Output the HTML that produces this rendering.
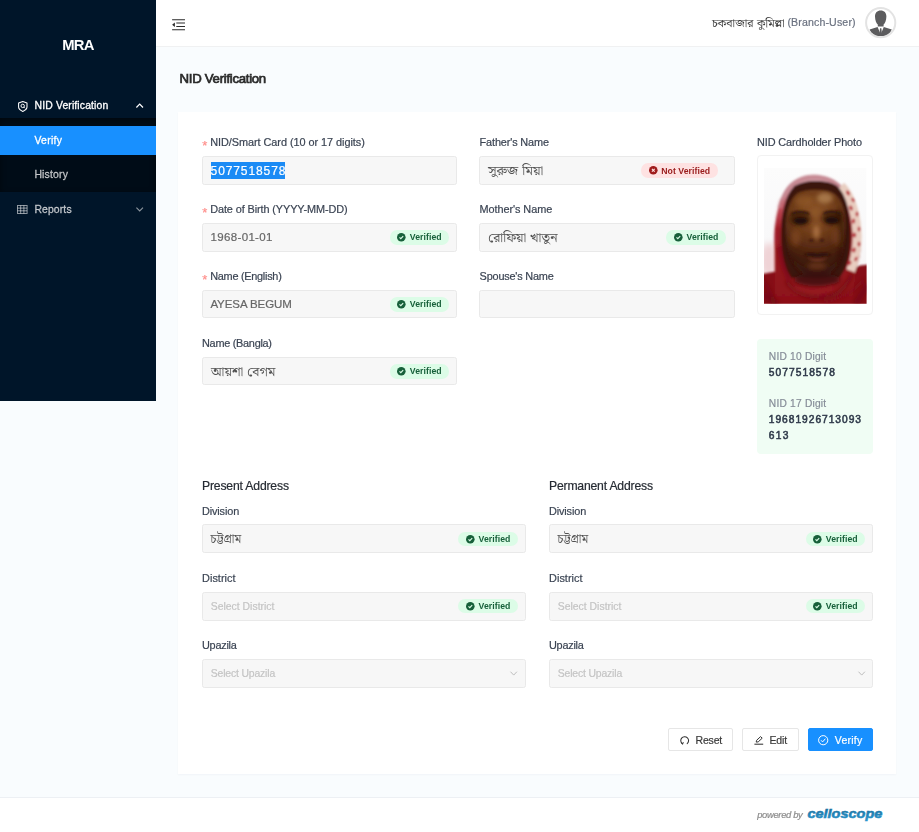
<!DOCTYPE html>
<html lang="en">
<head>
<meta charset="utf-8">
<title>NID Verification</title>
<style>
*{box-sizing:border-box;margin:0;padding:0}
html,body{width:919px;height:832px;overflow:hidden}
body{position:relative;background:#f9fcfe;font-family:"Liberation Sans","Noto Sans Bengali","Noto Serif Bengali",sans-serif;color:#333}
.t{position:absolute;white-space:pre;line-height:20px;display:block;-webkit-text-stroke:.2px}
aside .t{-webkit-text-stroke:.3px}
.t.bn{font-family:"Liberation Sans","Noto Serif Bengali","Noto Sans Bengali",serif;-webkit-text-stroke:0}
.abs{position:absolute}
.tx{position:absolute;left:0;top:0;right:0;bottom:0;will-change:transform}
aside{position:absolute;left:0;top:0;width:156px;height:400.5px;background:#001529}
aside .sub{position:absolute;left:0;top:117.5px;width:156px;height:74.5px;background:#000c17;box-shadow:inset 0 2px 6px rgba(0,0,0,.45)}
aside .active{position:absolute;left:0;top:126px;width:156px;height:29px;background:#1890ff}
header{position:absolute;left:156px;top:0;width:763px;height:47px;background:#fff;border-bottom:1px solid #f0f1f2}
main{position:absolute;left:156px;top:46px;width:763px;height:751px}
.card{position:absolute;left:178px;top:112px;width:718px;height:662px;background:#fff;box-shadow:0 1px 2px rgba(20,40,80,.035)}
footer{position:absolute;left:0;top:797px;width:919px;height:35px;background:#fff;border-top:1px solid #edf0f4}
.in{position:absolute;height:28.2px;background:#f7f7f7;border:1px solid #e9e9e9;border-radius:2.5px}
.pill{position:absolute;height:14.4px;border-radius:7.2px}
.pill.v{background:#dcfce7}
.pill.n{background:#fee2e2}
.btn{position:absolute;top:616.3px;height:22.9px;border:1px solid #e6e6e6;background:#fff;border-radius:2px}
.btn.primary{background:#1890ff;border-color:#1890ff}
svg{position:absolute;overflow:visible}
</style>
</head>
<body>

<aside>
  <div class="sub"></div>
  <div class="active"></div>
  <!-- shield icon -->
  <svg style="left:17.6px;top:100.8px" width="9.6" height="11" viewBox="0 0 9.6 11" fill="none" stroke="#fff" stroke-width="1.05" stroke-linejoin="round">
    <path d="M4.8 .6 L9 2 V6.1 C9 8.2 6.6 9.7 4.8 10.4 C3 9.7 .6 8.2 .6 6.1 V2 Z"/>
    <circle cx="4.7" cy="4.9" r="1.7" stroke-width=".95"/>
    <path d="M5.9 6.1 L7 7.2" stroke-width=".95"/>
  </svg>
  <!-- chevron up -->
  <svg style="left:136px;top:103.4px" width="7.4" height="5" viewBox="0 0 7.4 5" fill="none" stroke="#fff" stroke-width="1.2"><path d="M.4 4.5 L3.7 1.1 L7 4.5"/></svg>
  <!-- table icon -->
  <svg style="left:16.8px;top:205.2px" width="10.6" height="9" viewBox="0 0 10.6 9" fill="none" stroke="rgba(255,255,255,.58)" stroke-width=".95">
    <rect x=".5" y=".5" width="9.6" height="8"/>
    <path d="M.5 3.1 H10.1 M.5 5.8 H10.1 M3.7 .5 V8.5 M6.9 .5 V8.5"/>
  </svg>
  <!-- chevron down -->
  <svg style="left:136px;top:206.8px" width="7.4" height="5" viewBox="0 0 7.4 5" fill="none" stroke="rgba(255,255,255,.55)" stroke-width="1.1"><path d="M.4 .6 L3.7 4 L7 .6"/></svg>
<div class="tx">
<span class="t" style="left:62.30px;top:35px;font-size:14.8px;color:#fff;font-weight:700;letter-spacing:-0.752px;-webkit-text-stroke:0;">MRA</span>
<span class="t" style="left:34.60px;top:96px;font-size:10.4px;color:#fff;letter-spacing:0.133px;">NID Verification</span>
<span class="t" style="left:34.40px;top:131px;font-size:10.4px;color:#fff;letter-spacing:0.320px;">Verify</span>
<span class="t" style="left:34.40px;top:165px;font-size:10.4px;color:rgba(255,255,255,.65);letter-spacing:0.209px;">History</span>
<span class="t" style="left:34.40px;top:200px;font-size:10.4px;color:rgba(255,255,255,.65);letter-spacing:0.135px;">Reports</span>
</div>
</aside>

<header>
  <!-- menu-fold icon -->
  <svg style="left:16px;top:18.6px" width="13.2" height="11.6" viewBox="0 0 13.2 11.6" fill="none" stroke="#2b2b2b" stroke-width="1.15">
    <path d="M.1 .7 H13 M4.3 4 H13 M4.3 7.5 H13 M.1 10.8 H13"/>
    <path d="M.1 5.75 L2.9 3.5 V8 Z" fill="#2b2b2b" stroke="none"/>
  </svg>
  <!-- avatar -->
  <svg style="left:708.6px;top:7.2px" width="31.4" height="31.4" viewBox="0 0 31.4 31.4">
    <defs><clipPath id="avc"><circle cx="15.7" cy="15.7" r="13.4"/></clipPath></defs>
    <circle cx="15.7" cy="15.7" r="14.6" fill="#fff" stroke="#e3e3e3" stroke-width="2"/>
    <g clip-path="url(#avc)" fill="#5c5c5e">
      <path d="M15.7 3.4 C19.2 3.4 21.4 5.6 21.4 9.4 C21.4 13.4 19.8 16.6 18.6 17.6 L18.6 19.6 L12.8 19.6 L12.8 17.6 C11.6 16.6 10 13.4 10 9.4 C10 5.6 12.2 3.4 15.7 3.4 Z"/>
      <path d="M4.6 22.4 L12.6 19.9 L15.7 27.5 L18.8 19.9 L26.8 22.4 C25 27.5 20.5 29.6 15.7 29.6 C10.9 29.6 6.4 27.5 4.6 22.4 Z"/>
      <path d="M15 21.2 H16.4 L17 27.4 L15.7 28.9 L14.4 27.4 Z"/>
    </g>
  </svg>
<div class="tx">
<span class="t bn" style="left:556.00px;top:13px;font-size:11.42px;color:#333;transform:scaleX(1.063);transform-origin:0 50%;">চকবাজার কুমিল্লা</span>
<span class="t" style="left:631.40px;top:12px;font-size:10.6px;color:#6b7280;letter-spacing:0.139px;">(Branch-User)</span>
</div>
</header>

<main>
<div class="tx">
<span class="t" style="left:23.60px;top:23px;font-size:13.2px;color:#2a2a2a;letter-spacing:-0.286px;-webkit-text-stroke:.7px #2a2a2a;">NID Verification</span>
</div>
</main>

<section class="card">
  <!-- inputs: top form -->
  <div class="in" style="left:24px;top:44px;width:255px;height:29px"></div>
  <div class="in" style="left:24px;top:111px;width:255px;height:29px"></div>
  <div class="in" style="left:24px;top:178px;width:255px;height:28px"></div>
  <div class="in" style="left:24px;top:245px;width:255px;height:28px"></div>
  <div class="in" style="left:301.3px;top:44px;width:255.3px;height:29px"></div>
  <div class="in" style="left:301.3px;top:111px;width:255.3px;height:29px"></div>
  <div class="in" style="left:301.3px;top:178px;width:255.3px;height:28px"></div>
  <div class="abs" style="left:32.7px;top:49.5px;width:74.3px;height:17.2px;background:#1b8bf5"></div>
  <!-- photo frame -->
  <div class="abs" style="left:579.4px;top:43.2px;width:115.4px;height:160px;background:#fff;border:1px solid #f2f2f2;border-radius:4px"></div>
    <svg style="left:586px;top:55.8px" width="102.6" height="135.7" viewBox="0 0 102.6 135.7" role="img" aria-label="NID cardholder photo">
    <defs>
      <clipPath id="pc"><rect width="102.6" height="135.7"/></clipPath>
      <filter id="b1" x="-10%" y="-10%" width="120%" height="120%"><feGaussianBlur stdDeviation="1.1"/></filter>
      <filter id="b2" x="-20%" y="-20%" width="140%" height="140%"><feGaussianBlur stdDeviation="2"/></filter>
      <filter id="b3" x="-30%" y="-30%" width="160%" height="160%"><feGaussianBlur stdDeviation="3.2"/></filter>
      <radialGradient id="fg" cx="51" cy="44" r="50" gradientUnits="userSpaceOnUse">
        <stop offset="0" stop-color="#8e5629"/><stop offset=".38" stop-color="#74401b"/><stop offset=".75" stop-color="#542811"/><stop offset="1" stop-color="#3f1a0c"/>
      </radialGradient>
      <linearGradient id="hg" x1="0" y1="6" x2="0" y2="136" gradientUnits="userSpaceOnUse"><stop offset="0" stop-color="#d3a3ab"/><stop offset=".14" stop-color="#c98a95"/><stop offset=".3" stop-color="#b54550"/><stop offset=".42" stop-color="#9b1721"/><stop offset="1" stop-color="#8c1119"/></linearGradient>
      <linearGradient id="bgg" x1="0" y1="0" x2="0" y2="1"><stop offset="0" stop-color="#fcfcfc"/><stop offset=".55" stop-color="#f8f8f9"/><stop offset="1" stop-color="#f6efef"/></linearGradient>
    </defs>
    <g clip-path="url(#pc)">
      <rect width="102.6" height="135.7" fill="url(#bgg)"/>
      <ellipse cx="5" cy="92" rx="9" ry="17" fill="#efd3d6" filter="url(#b3)"/>
      <g filter="url(#b1)">
        <!-- clothing -->
        <path d="M-2 106 L16 102.8 L40 100 L90 100 L96 97.6 L105 96.4 L105 138 L-2 138 Z" fill="#861018"/>
        <!-- scarf hood -->
        <path d="M10.8 136 L10.6 68 C11 54 13.6 38 20.4 23 C27.4 10.6 39 6.4 50 6.4 C62 6.8 70 10.8 74.4 15.2 C80.4 21 85 27.6 88 35 C92.4 43.6 95.2 55 96.4 67.4 C97.4 80 96 92 92 100.4 L88 136 Z" fill="url(#hg)"/>
        <!-- dusky top band of scarf -->
        <path d="M15.6 40 C20 20 33 9.4 50 9.2 C64 9.4 73 14 79 22" fill="none" stroke="#c68993" stroke-width="3.6"/>
        <!-- right patterned band: cream base with red checks -->
        <path d="M77 18 C85 26 90 40 92.2 55 C94 68 93.6 86 86.6 103" fill="none" stroke="#e8cdc0" stroke-width="9"/>
        <g fill="#b8323a">
          <ellipse cx="84" cy="25" rx="1.6" ry="2.6" transform="rotate(-35 84 25)"/>
          <ellipse cx="89" cy="32" rx="1.4" ry="2.4" transform="rotate(-25 89 32)"/>
          <ellipse cx="87" cy="40" rx="1.6" ry="2.6" transform="rotate(-18 87 40)"/>
          <ellipse cx="93" cy="46" rx="1.4" ry="2.6"/>
          <ellipse cx="89.6" cy="53" rx="1.6" ry="2.6"/>
          <ellipse cx="95" cy="61" rx="1.4" ry="2.6"/>
          <ellipse cx="90.6" cy="67" rx="1.6" ry="2.6"/>
          <ellipse cx="95" cy="76" rx="1.4" ry="2.6"/>
          <ellipse cx="90" cy="82" rx="1.6" ry="2.6" transform="rotate(14 90 82)"/>
          <ellipse cx="92" cy="91" rx="1.4" ry="2.4" transform="rotate(25 92 91)"/>
          <ellipse cx="85.6" cy="95" rx="1.6" ry="2.4" transform="rotate(35 85.6 95)"/>
        </g>
        <!-- dark hair / shadow under the scarf -->
        <path d="M16.8 70 C16.6 46 21 28 30 18.6 C38.6 11.4 62.6 11.2 72.4 17.4 C82.4 26 86.6 45 86.6 68 C86.6 86 83 101 75 110 L27 110 C20 101 17 86 16.8 70 Z" fill="#3a1611"/>
      </g>
      <g filter="url(#b1)">
        <!-- face -->
        <path d="M21.6 64 C21 45 25 31 34 24.4 C44 20.4 60 20.4 70 25.2 C79 31 82 44 81.6 61 C81.2 79 78 93 70 103 C62 110.6 42 110.6 34 103 C26 94 22.2 80 21.6 64 Z" fill="url(#fg)"/>
      </g>
      <g filter="url(#b2)">
        <ellipse cx="61" cy="30" rx="8" ry="5.4" fill="#b98a5a" opacity=".7"/>
        <ellipse cx="40" cy="33" rx="9" ry="5.6" fill="#965c2c" opacity=".55"/>
        <ellipse cx="31.6" cy="70" rx="5" ry="8" fill="#8e5026" opacity=".5"/>
        <ellipse cx="72" cy="69" rx="4.4" ry="8" fill="#80451f" opacity=".45"/>
        <ellipse cx="52.4" cy="64" rx="3.4" ry="7" fill="#b97d4c" opacity=".75"/>
        <ellipse cx="53" cy="97.6" rx="9" ry="3.6" fill="#7d4020" opacity=".55"/>
        <!-- eye-zone shadow -->
        <ellipse cx="36" cy="51" rx="11" ry="7" fill="#2f1508" opacity=".7"/>
        <ellipse cx="68.4" cy="50.4" rx="11" ry="7" fill="#2f1508" opacity=".7"/>
        <!-- right-side and lower-face shading -->
        <path d="M76 40 C82 52 82 80 72 100 C76 84 76 58 72 44 Z" fill="#2e1208" opacity=".55"/>
        <path d="M23 82 C29 100 42 109 53 109 C64 109 75 100 80 82 C74 96 64 101.6 53 101.6 C42 101.6 30 96 23 82 Z" fill="#34140b" opacity=".75"/>
        <ellipse cx="53" cy="111.6" rx="23" ry="6.4" fill="#3c1210" opacity=".85"/>
      </g>
      <g filter="url(#b1)">
        <!-- brows + eyes -->
        <path d="M27.6 46.2 C32 43.6 40 43.6 45 46" fill="none" stroke="#2f160a" stroke-width="2.2"/>
        <path d="M59.6 45.6 C64 43.2 72 43.4 77 46.2" fill="none" stroke="#2f160a" stroke-width="2.2"/>
        <ellipse cx="36.6" cy="52.8" rx="6.6" ry="3.2" fill="#24100a"/>
        <ellipse cx="67.8" cy="52.2" rx="6.6" ry="3.2" fill="#24100a"/>
        <!-- nose -->
        <ellipse cx="47.4" cy="72.6" rx="2.2" ry="1.5" fill="#3f1b0c"/>
        <ellipse cx="58" cy="72.6" rx="2.2" ry="1.5" fill="#3f1b0c"/>
        <!-- mouth -->
        <path d="M39.6 86.6 C46 84.2 50 85.2 53.4 85.8 C57 85.2 61 84.2 67.4 86.6 C61 89.4 46 89.4 39.6 86.6 Z" fill="#2e110d"/>
        <path d="M43 90 C48 94 59 94 64 90 C59 91.4 48 91.4 43 90 Z" fill="#84402f" opacity=".8"/>
      </g>
      <g filter="url(#b2)" fill="none">
        <!-- scarf folds -->
        <path d="M14.6 58 C14.6 84 18 100 26 112" stroke="#760e16" stroke-width="3.2" opacity=".85"/>
        <path d="M22 113 C32 127 48 132 64 129 C74 127 82 119 88 106" stroke="#6f0d14" stroke-width="3.4" opacity=".8"/>
        <path d="M30 119.6 C40 125 56 125 70 118.6" stroke="#ab202b" stroke-width="2.4" opacity=".5"/>
        <path d="M-2 112 C4 118 8 126 10 136" stroke="#720d15" stroke-width="3.4" opacity=".65"/>
        <path d="M-2 126 L14 136 M104 116 L92 136" stroke="#6a0b12" stroke-width="6" opacity=".5"/>
        <path d="M60 134 C76 132 90 124 101 110" stroke="#7c0f17" stroke-width="3" opacity=".5"/>
        <path d="M18.6 32 C14.4 46 12.8 60 12.8 78" stroke="#c23540" stroke-width="2.4" opacity=".65"/>
      </g>
    </g>
  </svg>

  <!-- NID panel -->
  <div class="abs" style="left:579px;top:226.6px;width:116px;height:115.6px;background:#f0fdf4;border-radius:4px"></div>
  <!-- inputs: address -->
  <div class="in" style="left:24px;top:412px;width:323.8px;height:29px"></div>
  <div class="in" style="left:24px;top:480px;width:323.8px;height:29px"></div>
  <div class="in" style="left:24px;top:547px;width:323.8px;height:29px"></div>
  <div class="in" style="left:371.2px;top:412px;width:323.8px;height:29px"></div>
  <div class="in" style="left:371.2px;top:480px;width:323.8px;height:29px"></div>
  <div class="in" style="left:371.2px;top:547px;width:323.8px;height:29px"></div>
  <!-- select chevrons -->
  <svg style="left:332.4px;top:559.3px" width="7.4" height="5" viewBox="0 0 7.4 5" fill="none" stroke="#bdbdbd" stroke-width="1"><path d="M.5 .7 L3.7 4.1 L6.9 .7"/></svg>
  <svg style="left:679.6px;top:559.3px" width="7.4" height="5" viewBox="0 0 7.4 5" fill="none" stroke="#bdbdbd" stroke-width="1"><path d="M.5 .7 L3.7 4.1 L6.9 .7"/></svg>
  <div class="pill v" style="left:211.6px;top:118.2px;width:59.2px"></div>
<svg style="left:218.9px;top:121.1px" width="8.6" height="8.6" viewBox="0 0 8.6 8.6"><circle cx="4.3" cy="4.3" r="4.3" fill="#17603a"/><path d="M2.5 4.4 L3.8 5.7 L6.2 3.1" fill="none" stroke="#dcfce7" stroke-width="1.15"/></svg>
<div class="pill v" style="left:211.6px;top:185.2px;width:59.2px"></div>
<svg style="left:218.9px;top:188.1px" width="8.6" height="8.6" viewBox="0 0 8.6 8.6"><circle cx="4.3" cy="4.3" r="4.3" fill="#17603a"/><path d="M2.5 4.4 L3.8 5.7 L6.2 3.1" fill="none" stroke="#dcfce7" stroke-width="1.15"/></svg>
<div class="pill v" style="left:211.6px;top:252.2px;width:59.2px"></div>
<svg style="left:218.9px;top:255.1px" width="8.6" height="8.6" viewBox="0 0 8.6 8.6"><circle cx="4.3" cy="4.3" r="4.3" fill="#17603a"/><path d="M2.5 4.4 L3.8 5.7 L6.2 3.1" fill="none" stroke="#dcfce7" stroke-width="1.15"/></svg>
<div class="pill n" style="left:463.0px;top:51.3px;width:77.4px"></div>
<svg style="left:471.0px;top:54.2px" width="8.6" height="8.6" viewBox="0 0 8.6 8.6"><circle cx="4.3" cy="4.3" r="4.3" fill="#a01c1c"/><path d="M2.9 2.9 L5.7 5.7 M5.7 2.9 L2.9 5.7" fill="none" stroke="#fee2e2" stroke-width="1.1"/></svg>
<div class="pill v" style="left:488.4px;top:118.2px;width:59.8px"></div>
<svg style="left:495.7px;top:121.1px" width="8.6" height="8.6" viewBox="0 0 8.6 8.6"><circle cx="4.3" cy="4.3" r="4.3" fill="#17603a"/><path d="M2.5 4.4 L3.8 5.7 L6.2 3.1" fill="none" stroke="#dcfce7" stroke-width="1.15"/></svg>
<div class="pill v" style="left:280.4px;top:419.6px;width:60.0px"></div>
<svg style="left:287.7px;top:422.5px" width="8.6" height="8.6" viewBox="0 0 8.6 8.6"><circle cx="4.3" cy="4.3" r="4.3" fill="#17603a"/><path d="M2.5 4.4 L3.8 5.7 L6.2 3.1" fill="none" stroke="#dcfce7" stroke-width="1.15"/></svg>
<div class="pill v" style="left:280.4px;top:486.9px;width:60.0px"></div>
<svg style="left:287.7px;top:489.8px" width="8.6" height="8.6" viewBox="0 0 8.6 8.6"><circle cx="4.3" cy="4.3" r="4.3" fill="#17603a"/><path d="M2.5 4.4 L3.8 5.7 L6.2 3.1" fill="none" stroke="#dcfce7" stroke-width="1.15"/></svg>
<div class="pill v" style="left:627.6px;top:419.6px;width:59.6px"></div>
<svg style="left:634.9px;top:422.5px" width="8.6" height="8.6" viewBox="0 0 8.6 8.6"><circle cx="4.3" cy="4.3" r="4.3" fill="#17603a"/><path d="M2.5 4.4 L3.8 5.7 L6.2 3.1" fill="none" stroke="#dcfce7" stroke-width="1.15"/></svg>
<div class="pill v" style="left:627.6px;top:486.9px;width:59.6px"></div>
<svg style="left:634.9px;top:489.8px" width="8.6" height="8.6" viewBox="0 0 8.6 8.6"><circle cx="4.3" cy="4.3" r="4.3" fill="#17603a"/><path d="M2.5 4.4 L3.8 5.7 L6.2 3.1" fill="none" stroke="#dcfce7" stroke-width="1.15"/></svg>

  <!-- buttons -->
  <div class="btn" style="left:490.2px;width:64.4px"></div>
  <div class="btn" style="left:564.1px;width:56.7px"></div>
  <div class="btn primary" style="left:629.6px;width:65.6px"></div>
  <!-- reset icon -->
  <svg style="left:501.6px;top:623.5px" width="9.4" height="9" viewBox="0 0 9.4 9" fill="none" stroke="#333" stroke-width="1.05" stroke-linecap="round">
    <path d="M2.6 7.9 A3.9 3.9 0 1 1 7.2 7.6"/>
    <path d="M1.2 6.9 L2.7 8.1 L3.2 6.4" stroke-width=".9"/>
  </svg>
  <!-- edit icon -->
  <svg style="left:575.8px;top:624.2px" width="9.6" height="8.8" viewBox="0 0 9.6 8.8" fill="none" stroke="#333" stroke-width="1" stroke-linejoin="round">
    <path d="M2.2 6.1 L2.6 4.3 L6.6 .6 L8.2 2.2 L4.2 5.9 Z"/>
    <path d="M.4 8.2 H9.2" stroke-width="1.05"/>
  </svg>
  <!-- verify icon -->
  <svg style="left:640.3px;top:622.6px" width="10.4" height="10.4" viewBox="0 0 10.4 10.4" fill="none" stroke="#fff" stroke-width="1">
    <circle cx="5.2" cy="5.2" r="4.6"/>
    <path d="M3.1 5.3 L4.6 6.9 L7.4 3.7"/>
  </svg>
<div class="tx">
<span class="t" style="left:24.20px;top:24px;font-size:13px;color:#ff8f8c;">*</span>
<span class="t" style="left:32.20px;top:20px;font-size:10.9px;color:#3b4453;letter-spacing:-0.050px;">NID/Smart Card (10 or 17 digits)</span>
<span class="t" style="left:24.20px;top:91px;font-size:13px;color:#ff8f8c;">*</span>
<span class="t" style="left:32.20px;top:87px;font-size:10.9px;color:#3b4453;letter-spacing:-0.104px;">Date of Birth (YYYY-MM-DD)</span>
<span class="t" style="left:24.20px;top:158px;font-size:13px;color:#ff8f8c;">*</span>
<span class="t" style="left:32.20px;top:154px;font-size:10.9px;color:#3b4453;letter-spacing:-0.266px;">Name (English)</span>
<span class="t" style="left:24.00px;top:221px;font-size:10.9px;color:#3b4453;letter-spacing:-0.271px;">Name (Bangla)</span>
<span class="t" style="left:301.60px;top:20px;font-size:10.9px;color:#3b4453;letter-spacing:-0.140px;">Father&#x27;s Name</span>
<span class="t" style="left:301.60px;top:87px;font-size:10.9px;color:#3b4453;letter-spacing:-0.075px;">Mother&#x27;s Name</span>
<span class="t" style="left:301.60px;top:154px;font-size:10.9px;color:#3b4453;letter-spacing:-0.196px;">Spouse&#x27;s Name</span>
<span class="t" style="left:579.00px;top:20px;font-size:10.9px;color:#3b4453;letter-spacing:-0.113px;">NID Cardholder Photo</span>
<span class="t sel" style="left:32.60px;top:49px;font-size:12px;color:#fff;letter-spacing:0.894px;">5077518578</span>
<span class="t" style="left:32.60px;top:115px;font-size:11.5px;color:#666;letter-spacing:0.330px;">1968-01-01</span>
<span class="t" style="left:32.40px;top:182px;font-size:11.5px;color:#666;letter-spacing:-0.083px;">AYESA BEGUM</span>
<span class="t bn" style="left:32.60px;top:250px;font-size:12.54px;color:#525252;transform:scaleX(1.115);transform-origin:0 50%;">আয়শা বেগম</span>
<span class="t bn" style="left:310.20px;top:49px;font-size:12.54px;color:#525252;transform:scaleX(1.127);transform-origin:0 50%;">সুরুজ মিয়া</span>
<span class="t bn" style="left:310.20px;top:116px;font-size:12.54px;color:#525252;transform:scaleX(1.112);transform-origin:0 50%;">রোফিয়া খাতুন</span>
<span class="t" style="left:590.80px;top:235px;font-size:10.2px;color:#858c97;letter-spacing:0.225px;">NID 10 Digit</span>
<span class="t" style="left:590.80px;top:251px;font-size:10.2px;color:#2f3a4a;letter-spacing:1.059px;-webkit-text-stroke:.55px #2f3a4a;">5077518578</span>
<span class="t" style="left:590.80px;top:282px;font-size:10.2px;color:#858c97;letter-spacing:0.225px;">NID 17 Digit</span>
<span class="t" style="left:590.80px;top:298px;font-size:10.2px;color:#2f3a4a;letter-spacing:0.990px;-webkit-text-stroke:.55px #2f3a4a;">19681926713093</span>
<span class="t" style="left:590.80px;top:314px;font-size:10.2px;color:#2f3a4a;letter-spacing:1.300px;-webkit-text-stroke:.55px #2f3a4a;">613</span>
<span class="t" style="left:24.00px;top:364px;font-size:12.2px;color:#262b33;letter-spacing:-0.174px;">Present Address</span>
<span class="t" style="left:371.00px;top:364px;font-size:12.2px;color:#262b33;letter-spacing:-0.190px;">Permanent Address</span>
<span class="t" style="left:24.00px;top:389px;font-size:10.9px;color:#3b4453;letter-spacing:-0.134px;">Division</span>
<span class="t" style="left:24.00px;top:456px;font-size:10.9px;color:#3b4453;letter-spacing:0.046px;">District</span>
<span class="t" style="left:24.00px;top:523px;font-size:10.9px;color:#3b4453;letter-spacing:-0.255px;">Upazila</span>
<span class="t bn" style="left:32.60px;top:417px;font-size:12.37px;color:#525252;">চট্টগ্রাম</span>
<span class="t" style="left:32.80px;top:485px;font-size:10.4px;color:#c4c4c4;letter-spacing:0.006px;">Select District</span>
<span class="t" style="left:32.80px;top:552px;font-size:10.4px;color:#c4c4c4;letter-spacing:-0.156px;">Select Upazila</span>
<span class="t" style="left:371.00px;top:389px;font-size:10.9px;color:#3b4453;letter-spacing:-0.134px;">Division</span>
<span class="t" style="left:371.00px;top:456px;font-size:10.9px;color:#3b4453;letter-spacing:0.046px;">District</span>
<span class="t" style="left:371.00px;top:523px;font-size:10.9px;color:#3b4453;letter-spacing:-0.255px;">Upazila</span>
<span class="t bn" style="left:379.60px;top:417px;font-size:12.37px;color:#525252;">চট্টগ্রাম</span>
<span class="t" style="left:379.80px;top:485px;font-size:10.4px;color:#c4c4c4;letter-spacing:0.006px;">Select District</span>
<span class="t" style="left:379.80px;top:552px;font-size:10.4px;color:#c4c4c4;letter-spacing:-0.156px;">Select Upazila</span>
<span class="t" style="left:517.60px;top:618px;font-size:10.5px;color:#3a3a3a;letter-spacing:-0.209px;">Reset</span>
<span class="t" style="left:591.40px;top:618px;font-size:10.5px;color:#3a3a3a;letter-spacing:-0.098px;">Edit</span>
<span class="t" style="left:656.80px;top:618px;font-size:10.5px;color:#fff;letter-spacing:0.227px;">Verify</span>
<span class="t" style="left:231.80px;top:115px;font-size:8.7px;color:#17603a;font-weight:700;letter-spacing:0.058px;-webkit-text-stroke:0;">Verified</span>
<span class="t" style="left:231.80px;top:182px;font-size:8.7px;color:#17603a;font-weight:700;letter-spacing:0.058px;-webkit-text-stroke:0;">Verified</span>
<span class="t" style="left:231.80px;top:249px;font-size:8.7px;color:#17603a;font-weight:700;letter-spacing:0.058px;-webkit-text-stroke:0;">Verified</span>
<span class="t" style="left:483.30px;top:49px;font-size:8.7px;color:#991b1b;font-weight:700;letter-spacing:0.047px;-webkit-text-stroke:0;">Not Verified</span>
<span class="t" style="left:508.60px;top:115px;font-size:8.7px;color:#17603a;font-weight:700;letter-spacing:0.058px;-webkit-text-stroke:0;">Verified</span>
<span class="t" style="left:300.60px;top:417px;font-size:8.7px;color:#17603a;font-weight:700;letter-spacing:0.058px;-webkit-text-stroke:0;">Verified</span>
<span class="t" style="left:300.60px;top:484px;font-size:8.7px;color:#17603a;font-weight:700;letter-spacing:0.058px;-webkit-text-stroke:0;">Verified</span>
<span class="t" style="left:647.80px;top:417px;font-size:8.7px;color:#17603a;font-weight:700;letter-spacing:0.058px;-webkit-text-stroke:0;">Verified</span>
<span class="t" style="left:647.80px;top:484px;font-size:8.7px;color:#17603a;font-weight:700;letter-spacing:0.058px;-webkit-text-stroke:0;">Verified</span>
</div>
</section>

<footer>
  <svg style="left:805px;top:7px" width="80" height="18" viewBox="0 0 80 18">
    <defs><linearGradient id="cg" x1="0" y1="0" x2="0" y2="1"><stop offset="0" stop-color="#166a99"/><stop offset="1" stop-color="#2c97cd"/></linearGradient></defs>
    <text x="2.4" y="12.7" font-family="Liberation Sans, sans-serif" font-size="12.6" font-weight="700" font-style="italic" fill="url(#cg)" stroke="url(#cg)" stroke-width=".55" textLength="75" lengthAdjust="spacingAndGlyphs">celloscope</text>
  </svg>
<div class="tx">
<span class="t" style="left:757.20px;top:7px;font-size:9.4px;color:#8c8c8c;font-style:italic;letter-spacing:-0.319px;">powered by</span>
</div>
</footer>

</body>
</html>
